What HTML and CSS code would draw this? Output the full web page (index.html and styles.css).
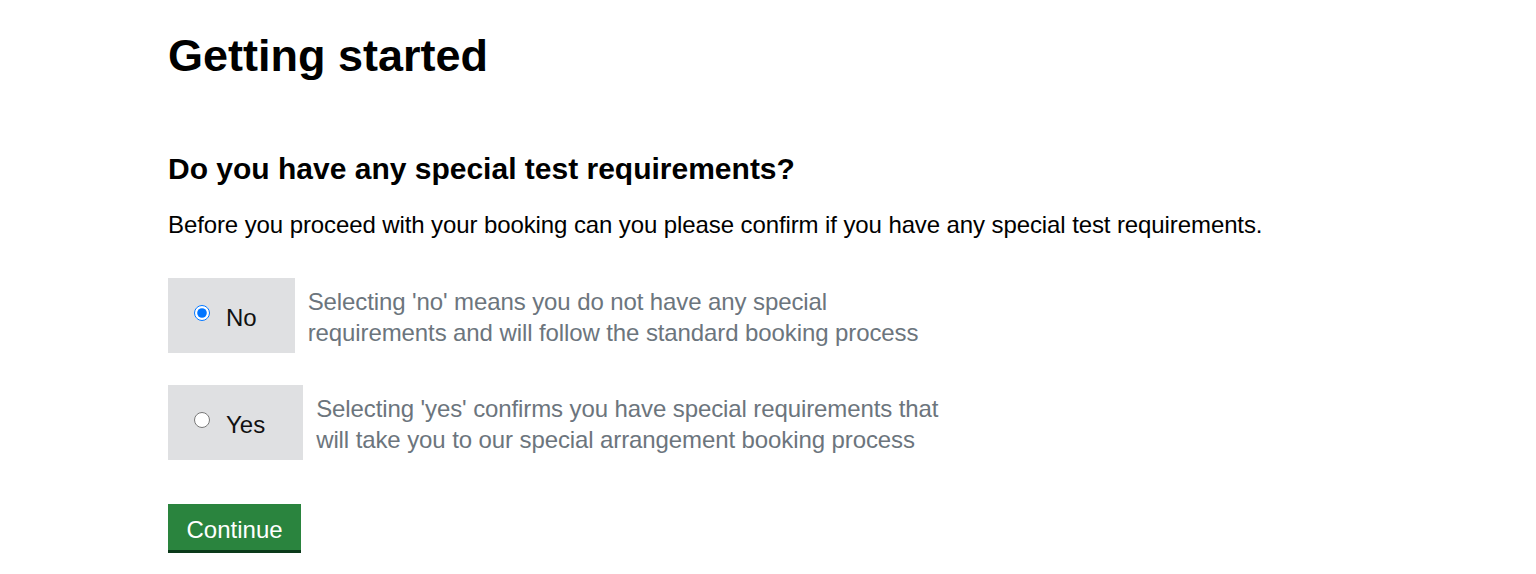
FILE: index.html
```html
<!DOCTYPE html>
<html lang="en">
<head>
<meta charset="utf-8">
<title>Getting started</title>
<link rel="stylesheet" href="styles.css">
</head>
<body>
<main class="page">
  <h1 class="title">Getting started</h1>
  <h2 class="question">Do you have any special test requirements?</h2>
  <p class="intro">Before you proceed with your booking can you please confirm if you have any special test requirements.</p>
  <form class="options">
    <div class="option">
      <label class="choice">
        <input type="radio" name="special" value="no" class="radio" checked>
        <span class="choice-label">No</span>
      </label>
      <p class="hint">Selecting 'no' means you do not have any special requirements and will follow the standard booking process</p>
    </div>
    <div class="option">
      <label class="choice">
        <input type="radio" name="special" value="yes" class="radio">
        <span class="choice-label">Yes</span>
      </label>
      <p class="hint">Selecting 'yes' confirms you have special requirements that will take you to our special arrangement booking process</p>
    </div>
    <button type="button" class="btn-continue">Continue</button>
  </form>
</main>
</body>
</html>
```

FILE: styles.css
```css
html, body {
  margin: 0;
  padding: 0;
  background: #ffffff;
}

body {
  font-family: "Liberation Sans", Arial, sans-serif;
  color: #0b0c0c;
}

.page {
  padding: 29px 0 0 168px;
}

.title {
  margin: 0;
  font-size: 45px;
  line-height: 54px;
  font-weight: 700;
  color: #000;
}

.question {
  margin: 68px 0 0;
  font-size: 30px;
  line-height: 36px;
  font-weight: 700;
  color: #000;
}

.intro {
  margin: 20px 0 0;
  font-size: 24px;
  line-height: 36px;
  color: #000;
  letter-spacing: -0.1px;
}

.options {
  margin-top: 35px;
  display: flex;
  flex-direction: column;
  align-items: flex-start;
  gap: 32px;
}

.option {
  display: flex;
  align-items: center;
  gap: 13px;
}

.choice {
  display: flex;
  align-items: center;
  height: 75px;
  box-sizing: border-box;
  padding: 0 38px 0 26px;
  background: #dfe0e2;
  cursor: pointer;
}

.radio {
  width: 16px;
  height: 16px;
  margin: -5px 16px 0 0;
  accent-color: #0075ff;
}

.choice-label {
  font-size: 24px;
  line-height: 30px;
  color: #111;
  padding-top: 5px;
}

.hint {
  margin: 3px 0 0;
  max-width: 640px;
  font-size: 24px;
  line-height: 31px;
  color: #6c757d;
  letter-spacing: -0.1px;
}

.btn-continue {
  margin-top: 12px;
  height: 49px;
  padding: 6px 18.5px 0;
  border: 0;
  border-bottom: 3px solid #0b3a1a;
  background: #2a843e;
  color: #ffffff;
  font-family: "Liberation Sans", Arial, sans-serif;
  font-size: 24px;
  line-height: 40px;
  cursor: pointer;
}
```
